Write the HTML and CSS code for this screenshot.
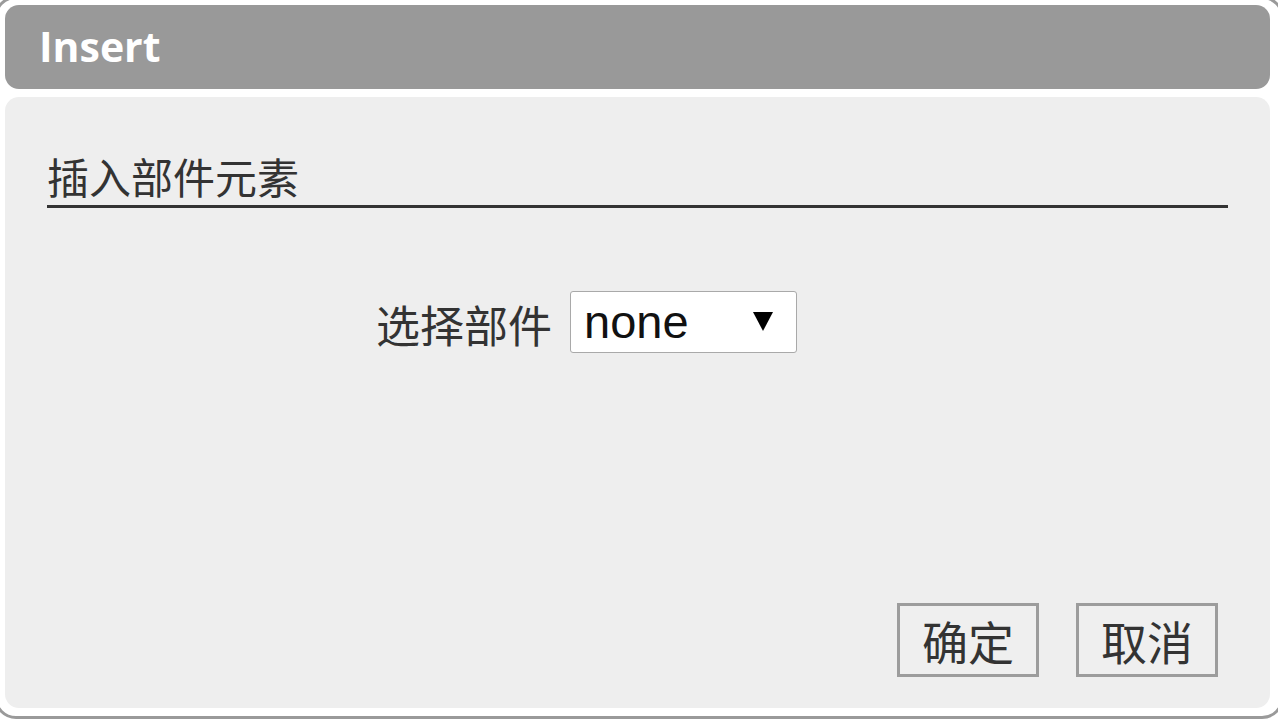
FILE: index.html
```html
<!DOCTYPE html>
<html lang="zh-CN">
<head>
<meta charset="utf-8">
<title>Insert</title>
<link rel="stylesheet" href="styles.css">
</head>
<body>
<div class="frame">
  <div class="titlebar"><span class="title">Insert</span></div>
  <div class="panel">
    <h3 class="heading">插入部件元素</h3>
    <div class="field-row">
      <label class="field-label">选择部件</label>
      <div class="select">
        <span class="select-value">none</span>
        <svg class="select-arrow" width="20" height="20" viewBox="0 0 20 20"><polygon points="0,1 20,1 10,20" fill="#000"/></svg>
      </div>
    </div>
    <div class="spacer"></div>
    <div class="actions">
      <button class="btn">确定</button>
      <button class="btn">取消</button>
    </div>
  </div>
</div>
</body>
</html>
```
FILE: styles.css
```css
html, body {
  margin: 0;
  padding: 0;
  background: #ffffff;
  overflow: hidden;
  width: 1278px;
  height: 720px;
}
.frame {
  box-sizing: border-box;
  width: 1290px;
  height: 723px;
  margin: -4px 0 0 -6px;
  border: 3px solid #9a9a9a;
  border-radius: 22px;
  padding: 6px 11px 8px 8px;
  display: flex;
  flex-direction: column;
  gap: 8px;
  background: #ffffff;
}
.titlebar {
  height: 84px;
  flex: none;
  background: #999999;
  border-radius: 14px;
  display: flex;
  align-items: center;
  padding-left: 34px;
}
.title {
  font-family: "Open Sans", "Liberation Sans", sans-serif;
  font-weight: 700;
  font-size: 41px;
  color: #ffffff;
  line-height: 1;
  margin-top: -1px;
}
.panel {
  flex: 1;
  background: #eeeeee;
  border-radius: 14px;
  padding: 54px 42px 31px 42px;
  display: flex;
  flex-direction: column;
  font-family: "Noto Sans CJK SC", "Liberation Sans", sans-serif;
  color: #333333;
}
.heading {
  margin: 0;
  font-size: 42px;
  font-weight: 400;
  line-height: 50px;
  padding-bottom: 4px;
  border-bottom: 3px solid #333333;
  padding-left: 0;
}
.field-row {
  margin-top: 83px;
  padding-left: 329px;
  display: flex;
  align-items: center;
  gap: 18px;
}
.field-label {
  font-size: 44px;
  line-height: 50px;
  margin-top: 3px;
}
.select {
  box-sizing: border-box;
  width: 227px;
  height: 62px;
  background: #ffffff;
  border: 1px solid #a9a9a9;
  border-radius: 3px;
  display: flex;
  align-items: center;
  justify-content: space-between;
  padding: 0 23px 0 13px;
}
.select-value {
  font-family: "Liberation Sans", Arial, sans-serif;
  font-size: 47px;
  color: #111111;
  line-height: 1;
  margin-top: -1px;
}
.select-arrow {
  display: block;
  margin-top: -2px;
}
.spacer {
  flex: 1;
}
.actions {
  display: flex;
  justify-content: flex-end;
  gap: 37px;
  padding-right: 10px;
}
.btn {
  box-sizing: border-box;
  width: 142px;
  height: 74px;
  border: 3px solid #9c9c9c;
  background: #efefef;
  font-family: "Noto Sans CJK SC", "Liberation Sans", sans-serif;
  font-size: 46px;
  color: #333333;
  line-height: 1;
  padding: 0;
  margin: 0;
  border-radius: 0;
}
```
